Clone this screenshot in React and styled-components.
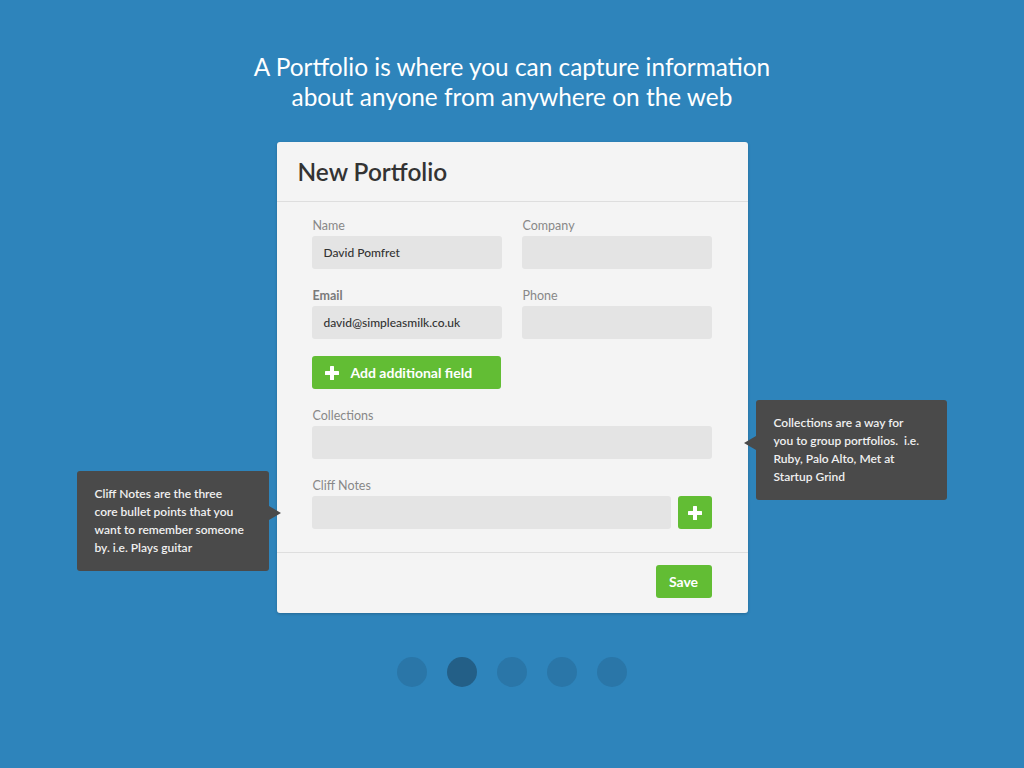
import React from "react";
import styled, { createGlobalStyle } from "styled-components";

const Global = createGlobalStyle`
  html, body { margin: 0; padding: 0; }
  body {
    background: #2e84bb;
    font-family: Lato, "Open Sans", sans-serif;
    -webkit-font-smoothing: antialiased;
  }
`;

const Page = styled.div`
  min-height: 768px;
  display: flex;
  flex-direction: column;
  align-items: center;
  padding-top: 52px;
  box-sizing: border-box;
`;

const Headline = styled.h1`
  margin: 0;
  font-size: 24.4px;
  line-height: 30px;
  font-weight: 400;
  color: #ffffff;
  text-align: center;
`;

const CardWrap = styled.div`
  position: relative;
  margin-top: 30px;
  width: 471px;
`;

const Card = styled.div`
  background: #f4f4f4;
  border-radius: 3px;
  box-shadow: 0 1px 3px rgba(0, 0, 0, 0.2);
`;

const CardHeader = styled.div`
  height: 60px;
  box-sizing: border-box;
  display: flex;
  align-items: center;
  padding-left: 21px;
  border-bottom: 1px solid #dedede;
`;

const CardTitle = styled.h2`
  margin: 0;
  font-size: 24.4px;
  font-weight: 600;
  color: #333333;
`;

const CardBody = styled.div`
  padding: 17px 36px 23px 35px;
  display: flex;
  flex-direction: column;
  gap: 20px;
`;

const Row = styled.div`
  display: grid;
  grid-template-columns: 190px 190px;
  column-gap: 20px;
`;

const Field = styled.div`
  display: flex;
  flex-direction: column;
`;

const Label = styled.label`
  font-size: 12.5px;
  line-height: 13px;
  height: 17px;
  padding-left: 1px;
  color: ${(p) => (p.$active ? "#7a7a7a" : "#888888")};
  font-weight: ${(p) => (p.$active ? 700 : 400)};
`;

const Input = styled.div`
  height: 33px;
  border-radius: 3px;
  background: #e4e4e4;
  box-sizing: border-box;
  padding-left: 12px;
  display: flex;
  align-items: center;
  font-size: 12px;
  font-weight: 500;
  color: #333333;
  flex: ${(p) => (p.$grow ? "1 1 auto" : "none")};
`;

const InlineRow = styled.div`
  display: flex;
  gap: 7px;
`;

const GreenButton = styled.button`
  border: none;
  margin: 0;
  font-family: inherit;
  background: #62bd34;
  color: #ffffff;
  border-radius: 3px;
  height: 33px;
  display: flex;
  align-items: center;
  cursor: pointer;
  font-weight: 700;
  font-size: 14px;
  padding: ${(p) => p.$pad || "0"};
  width: ${(p) => p.$w || "auto"};
  gap: ${(p) => p.$gap || "0"};
  justify-content: ${(p) => p.$justify || "center"};
  flex-shrink: 0;
`;

const AddRow = styled.div`
  display: flex;
  margin-top: -3px;
`;

const CardFooter = styled.div`
  border-top: 1px solid #dedede;
  padding: 12px 36px 15px 0;
  display: flex;
  justify-content: flex-end;
`;

const Tip = styled.div`
  position: absolute;
  top: ${(p) => p.$top}px;
  left: ${(p) => p.$left}px;
  width: ${(p) => p.$w}px;
  height: 100px;
  box-sizing: border-box;
  background: #4a4a4a;
  border-radius: 3px;
  padding: 14px 10px 0 18px;
  color: #f0f0f0;
  font-size: 12px;
  font-weight: 600;
  line-height: 18px;
  white-space: nowrap;

  &::after {
    content: "";
    position: absolute;
    top: ${(p) => p.$arrowTop}px;
    ${(p) => (p.$side === "left" ? "left: -12px;" : "right: -12px;")}
    border-top: 7px solid transparent;
    border-bottom: 7px solid transparent;
    ${(p) =>
      p.$side === "left"
        ? "border-right: 12px solid #4a4a4a;"
        : "border-left: 12px solid #4a4a4a;"}
  }
`;

const Dots = styled.div`
  margin-top: 44px;
  display: flex;
  gap: 20px;
`;

const Dot = styled.span`
  width: 30px;
  height: 30px;
  border-radius: 50%;
  background: ${(p) => (p.$active ? "#235f87" : "#2a76a8")};
`;

const Plus = ({ size = 14 }) => (
  <svg width={size} height={size} viewBox="0 0 14 14">
    <rect x="5" y="0" width="4" height="14" rx="0.5" fill="#fff" />
    <rect x="0" y="5" width="14" height="4" rx="0.5" fill="#fff" />
  </svg>
);

export default function App() {
  return (
    <>
      <Global />
      <Page>
        <Headline>
          A Portfolio is where you can capture information
          <br />
          about anyone from anywhere on the web
        </Headline>
        <CardWrap>
          <Card>
            <CardHeader>
              <CardTitle>New Portfolio</CardTitle>
            </CardHeader>
            <CardBody>
              <Row>
                <Field>
                  <Label>Name</Label>
                  <Input>David Pomfret</Input>
                </Field>
                <Field>
                  <Label>Company</Label>
                  <Input />
                </Field>
              </Row>
              <Row>
                <Field>
                  <Label $active>Email</Label>
                  <Input>david@simpleasmilk.co.uk</Input>
                </Field>
                <Field>
                  <Label>Phone</Label>
                  <Input />
                </Field>
              </Row>
              <AddRow>
                <GreenButton $w="189px" $pad="0 0 0 13px" $gap="12px" $justify="flex-start">
                  <Plus size={14} />
                  Add additional field
                </GreenButton>
              </AddRow>
              <Field>
                <Label>Collections</Label>
                <Input />
              </Field>
              <Field>
                <Label>Cliff Notes</Label>
                <InlineRow>
                  <Input $grow />
                  <GreenButton $w="34px">
                    <Plus size={14} />
                  </GreenButton>
                </InlineRow>
              </Field>
            </CardBody>
            <CardFooter>
              <GreenButton $w="56px">Save</GreenButton>
            </CardFooter>
          </Card>
          <Tip $top={258} $left={479} $w={191} $side="left" $arrowTop={36}>
            Collections are a way for
            <br />
            you to group portfolios.&nbsp; i.e.
            <br />
            Ruby, Palo Alto, Met at
            <br />
            Startup Grind
          </Tip>
          <Tip $top={329} $left={-200} $w={192} $side="right" $arrowTop={35}>
            Cliff Notes are the three
            <br />
            core bullet points that you
            <br />
            want to remember someone
            <br />
            by. i.e. Plays guitar
          </Tip>
        </CardWrap>
        <Dots>
          <Dot />
          <Dot $active />
          <Dot />
          <Dot />
          <Dot />
        </Dots>
      </Page>
    </>
  );
}
